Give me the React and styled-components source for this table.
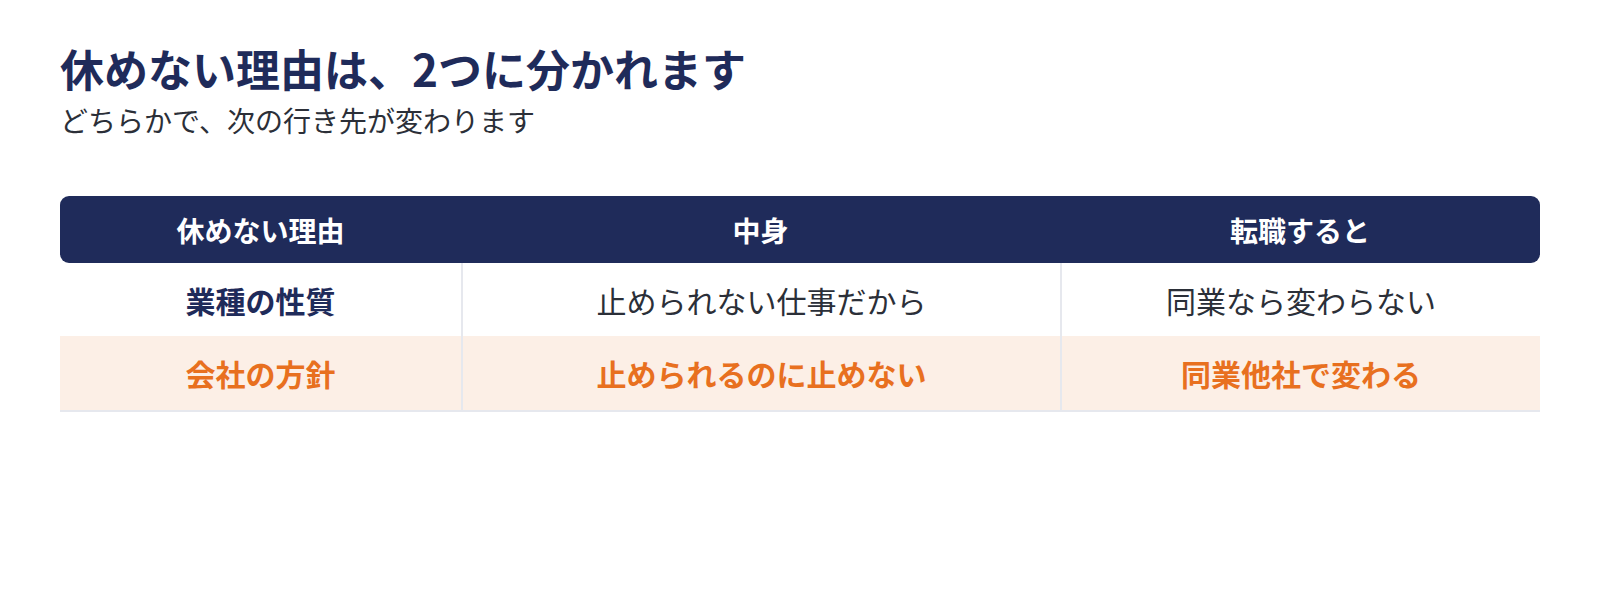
import React from "react";
import styled, { createGlobalStyle } from "styled-components";

const GlobalStyle = createGlobalStyle`
  body {
    margin: 0;
    background: #ffffff;
    font-family: "Noto Sans CJK JP", "Noto Sans", sans-serif;
  }
`;

const Page = styled.div`
  padding: 39px 60px 0 60px;
`;

const Title = styled.h1`
  margin: 0;
  font-size: 44px;
  line-height: 58px;
  font-weight: 700;
  color: #1f2b5a;
`;

const Subtitle = styled.p`
  margin: 3px 0 0 0;
  font-size: 28px;
  line-height: 40px;
  font-weight: 400;
  color: #2b2f38;
`;

const Table = styled.div`
  margin-top: 56px;
  width: 1480px;
`;

const Row = styled.div`
  display: grid;
  grid-template-columns: 401fr 599fr 480fr;
  background: ${({ $tint }) => ($tint ? "#fcefe6" : "#ffffff")};
  border-bottom: ${({ $last }) => ($last ? "2px solid #e6e8ee" : "none")};
`;

const HeadRow = styled(Row)`
  background: #1f2b5a;
  border-radius: 9px;
  height: 67px;
`;

const HeadCell = styled.div`
  display: flex;
  align-items: center;
  justify-content: center;
  color: #ffffff;
  font-size: 28px;
  font-weight: 700;
`;

const Cell = styled.div`
  display: flex;
  align-items: center;
  justify-content: center;
  height: ${({ $h }) => $h}px;
  font-size: 30px;
  font-weight: ${({ $bold }) => ($bold ? 700 : 400)};
  color: ${({ $color }) => $color};
  border-left: ${({ $first }) => ($first ? "none" : "2px solid #e6e8ee")};
`;

const rows = [
  {
    tint: false,
    h: 73,
    cells: [
      { text: "業種の性質", bold: true, color: "#1f2b5a" },
      { text: "止められない仕事だから", bold: false, color: "#2b2f38" },
      { text: "同業なら変わらない", bold: false, color: "#2b2f38" },
    ],
  },
  {
    tint: true,
    h: 74,
    cells: [
      { text: "会社の方針", bold: true, color: "#e8701f" },
      { text: "止められるのに止めない", bold: true, color: "#e8701f" },
      { text: "同業他社で変わる", bold: true, color: "#e8701f" },
    ],
  },
];

const App = () => {
  return (
    <Page>
      <GlobalStyle />
      <Title>休めない理由は、2つに分かれます</Title>
      <Subtitle>どちらかで、次の行き先が変わります</Subtitle>
      <Table>
        <HeadRow>
          <HeadCell>休めない理由</HeadCell>
          <HeadCell>中身</HeadCell>
          <HeadCell>転職すると</HeadCell>
        </HeadRow>
        {rows.map((r, i) => (
          <Row key={i} $tint={r.tint} $last={i === rows.length - 1}>
            {r.cells.map((c, j) => (
              <Cell key={j} $h={r.h} $first={j === 0} $bold={c.bold} $color={c.color}>
                {c.text}
              </Cell>
            ))}
          </Row>
        ))}
      </Table>
    </Page>
  );
};

export default App;
